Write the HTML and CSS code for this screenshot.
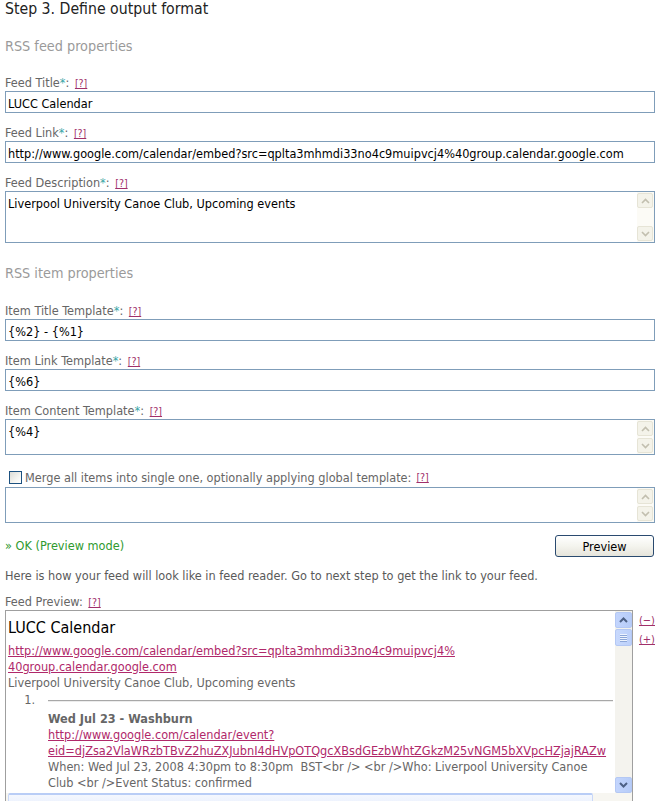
FILE: index.html
```html
<!DOCTYPE html>
<html>
<head>
<meta charset="utf-8">
<title>Step 3. Define output format</title>
<link rel="stylesheet" href="styles.css">
</head>
<body>
<div class="page">
  <h1 class="step">Step 3. Define output format</h1>

  <h2 class="section first">RSS feed properties</h2>

  <div class="field">
    <div class="lbl">Feed Title<span class="req">*</span>: <a class="help" href="#">[?]</a></div>
    <input class="txt" type="text" value="LUCC Calendar">
  </div>

  <div class="field">
    <div class="lbl">Feed Link<span class="req">*</span>: <a class="help" href="#">[?]</a></div>
    <input class="txt" type="text" value="http://www.google.com/calendar/embed?src=qplta3mhmdi33no4c9muipvcj4%40group.calendar.google.com">
  </div>

  <div class="field">
    <div class="lbl">Feed Description<span class="req">*</span>: <a class="help" href="#">[?]</a></div>
    <div class="ta tall">
      <textarea class="ta-in">Liverpool University Canoe Club, Upcoming events</textarea>
      <div class="sb-off">
        <div class="sbo-btn"><svg width="9" height="6" viewBox="0 0 9 6"><polyline points="1,5 4.5,1.5 8,5" fill="none" stroke="#c2bfaf" stroke-width="1.6"/></svg></div>
        <div class="sbo-track"></div>
        <div class="sbo-btn"><svg width="9" height="6" viewBox="0 0 9 6"><polyline points="1,1 4.5,4.5 8,1" fill="none" stroke="#c2bfaf" stroke-width="1.6"/></svg></div>
      </div>
    </div>
  </div>

  <h2 class="section second">RSS item properties</h2>

  <div class="field">
    <div class="lbl">Item Title Template<span class="req">*</span>: <a class="help" href="#">[?]</a></div>
    <input class="txt" type="text" value="{%2} - {%1}">
  </div>

  <div class="field">
    <div class="lbl">Item Link Template<span class="req">*</span>: <a class="help" href="#">[?]</a></div>
    <input class="txt" type="text" value="{%6}">
  </div>

  <div class="field">
    <div class="lbl">Item Content Template<span class="req">*</span>: <a class="help" href="#">[?]</a></div>
    <div class="ta short">
      <textarea class="ta-in">{%4}</textarea>
      <div class="sb-off">
        <div class="sbo-btn"><svg width="9" height="6" viewBox="0 0 9 6"><polyline points="1,5 4.5,1.5 8,5" fill="none" stroke="#c2bfaf" stroke-width="1.6"/></svg></div>
        <div class="sbo-track"></div>
        <div class="sbo-btn"><svg width="9" height="6" viewBox="0 0 9 6"><polyline points="1,1 4.5,4.5 8,1" fill="none" stroke="#c2bfaf" stroke-width="1.6"/></svg></div>
      </div>
    </div>
  </div>

  <div class="merge">
    <label class="chk-row"><span class="chk"></span>Merge all items into single one, optionally applying global template: <a class="help" href="#">[?]</a></label>
    <div class="ta short">
      <textarea class="ta-in"></textarea>
      <div class="sb-off">
        <div class="sbo-btn"><svg width="9" height="6" viewBox="0 0 9 6"><polyline points="1,5 4.5,1.5 8,5" fill="none" stroke="#c2bfaf" stroke-width="1.6"/></svg></div>
        <div class="sbo-track"></div>
        <div class="sbo-btn"><svg width="9" height="6" viewBox="0 0 9 6"><polyline points="1,1 4.5,4.5 8,1" fill="none" stroke="#c2bfaf" stroke-width="1.6"/></svg></div>
      </div>
    </div>
  </div>

  <div class="ok-row">
    <span class="ok">» OK (Preview mode)</span>
    <button class="btn" type="button">Preview</button>
  </div>

  <p class="note">Here is how your feed will look like in feed reader. Go to next step to get the link to your feed.</p>

  <div class="lbl pv-lbl">Feed Preview: <a class="help" href="#">[?]</a></div>

  <div class="pv-wrap">
    <div class="pv">
      <div class="pv-main">
        <div class="pv-content">
          <div class="pv-title">LUCC Calendar</div>
          <a class="pv-link" href="#">http://www.google.com/calendar/embed?src=qplta3mhmdi33no4c9muipvcj4%<br>40group.calendar.google.com</a>
          <div class="pv-text">Liverpool University Canoe Club, Upcoming events</div>
          <div class="pv-item">
            <div class="pv-num">1.</div>
            <div class="pv-body">
              <div class="pv-hr"></div>
              <div class="pv-ititle">Wed Jul 23 - Washburn</div>
              <a class="pv-link" href="#">http://www.google.com/calendar/event?<br>eid=djZsa2VlaWRzbTBvZ2huZXJubnI4dHVpOTQgcXBsdGEzbWhtZGkzM25vNGM5bXVpcHZjajRAZw</a>
              <div class="pv-text">When: Wed Jul 23, 2008 4:30pm to 8:30pm&nbsp; BST&lt;br /&gt; &lt;br /&gt;Who: Liverpool University Canoe<br>Club &lt;br /&gt;Event Status: confirmed</div>
            </div>
          </div>
        </div>
        <div class="sb-on">
          <div class="sbn-btn"><svg width="9" height="6" viewBox="0 0 9 6"><polyline points="1,5 4.5,1.5 8,5" fill="none" stroke="#4d6185" stroke-width="2"/></svg></div>
          <div class="sbn-thumb"><span></span><span></span><span></span><span></span></div>
          <div class="sbn-track"></div>
          <div class="sbn-btn"><svg width="9" height="6" viewBox="0 0 9 6"><polyline points="1,1 4.5,4.5 8,1" fill="none" stroke="#4d6185" stroke-width="2"/></svg></div>
        </div>
      </div>
      <div class="hsb">
        <div class="hsb-thumb"></div>
        <div class="hsb-track"></div>
      </div>
    </div>
    <div class="pv-ctrl">
      <a class="zoom" href="#">(&minus;)</a>
      <a class="zoom" href="#">(+)</a>
    </div>
  </div>
</div>
</body>
</html>
```

FILE: styles.css
```css
html, body {
  margin: 0;
  padding: 0;
  background: #ffffff;
}

body {
  font-family: "DejaVu Sans Condensed", "DejaVu Sans", sans-serif;
  font-size: 12.6px;
  color: #666666;
}

.page {
  padding: 0 6px 0 5px;
}

.step {
  margin: 0;
  font-size: 15.7px;
  line-height: 18px;
  font-weight: normal;
  color: #222222;
}

.section {
  margin: 0;
  font-size: 14.3px;
  line-height: 18px;
  font-weight: normal;
  color: #9a9a9a;
}

.section.first {
  margin-top: 19px;
  margin-bottom: 20px;
}

.section.second {
  margin-top: 21px;
  margin-bottom: 21px;
}

.field {
  margin-bottom: 12px;
}

.lbl {
  height: 16px;
  line-height: 16px;
  color: #666666;
}

.req {
  color: #3aa6a6;
}

.help {
  font-size: 10.5px;
  line-height: 10px;
  color: #a0306a;
  text-decoration: underline;
  margin-left: 2px;
}

.txt {
  display: block;
  box-sizing: border-box;
  width: 100%;
  height: 22px;
  margin: 0;
  padding: 2px 2px 0 2px;
  border: 1px solid #7f9db9;
  font-family: "DejaVu Sans Condensed", "DejaVu Sans", sans-serif;
  font-size: 12.6px;
  color: #000000;
  background: #ffffff;
  outline: none;
}

.ta {
  display: flex;
  box-sizing: border-box;
  width: 100%;
  border: 1px solid #7f9db9;
  background: #ffffff;
}

.ta.tall {
  height: 52px;
}

.ta.short {
  height: 36px;
}

.ta-in {
  flex: 1;
  margin: 0;
  padding: 4px 2px 0 2px;
  border: none;
  resize: none;
  overflow: hidden;
  outline: none;
  font-family: "DejaVu Sans Condensed", "DejaVu Sans", sans-serif;
  font-size: 12.6px;
  line-height: 15px;
  color: #000000;
  background: transparent;
}

.sb-off {
  width: 16px;
  display: flex;
  flex-direction: column;
  padding: 1px 1px 1px 0;
  background: #fbfaf4;
}

.sbo-btn {
  height: 15px;
  box-sizing: border-box;
  border: 1px solid #e6e4d6;
  border-radius: 2px;
  background: #f4f3ea;
  display: flex;
  align-items: center;
  justify-content: center;
}

.sbo-track {
  flex: 1;
  background: #fcfbf6;
}

.chk-row {
  display: flex;
  align-items: center;
  height: 20px;
  color: #666666;
}

.chk {
  display: inline-block;
  box-sizing: border-box;
  width: 13px;
  height: 13px;
  margin: 0 3px 0 4px;
  border: 1px solid #1c5180;
  background: linear-gradient(135deg, #dcdcd6 0%, #f4f4f0 60%, #ffffff 100%);
}

.chk-row .help {
  margin-left: 5px;
}

.ok-row {
  display: flex;
  align-items: center;
  justify-content: space-between;
  margin-top: 12px;
  height: 22px;
}

.ok {
  color: #2f9a2f;
  line-height: 16px;
}

.btn {
  box-sizing: border-box;
  width: 99px;
  height: 22px;
  margin: 0 1px 0 0;
  padding: 0;
  border: 1px solid #2a4a6f;
  border-radius: 3px;
  background: linear-gradient(#ffffff 0%, #f4f4ee 50%, #e5e4db 100%);
  font-family: "DejaVu Sans Condensed", "DejaVu Sans", sans-serif;
  font-size: 12.6px;
  color: #000000;
}

.note {
  margin: 11px 0 0 0;
  line-height: 16px;
  color: #5a5a5a;
}

.pv-lbl {
  margin-top: 10px;
}

.pv-wrap {
  display: flex;
  align-items: flex-start;
}

.pv {
  width: 631px;
  box-sizing: border-box;
  border: 1px solid #9f9f9f;
  display: flex;
  flex-direction: column;
}

.pv-main {
  display: flex;
  height: 182px;
}

.pv-content {
  flex: 1;
  overflow: hidden;
  padding: 7px 2px 0 2px;
  white-space: nowrap;
}

.pv-title {
  font-size: 16px;
  line-height: 20px;
  color: #000000;
  margin-bottom: 5px;
}

.pv-link {
  display: block;
  line-height: 16px;
  color: #b0286a;
  text-decoration: underline;
}

.pv-text {
  line-height: 16px;
  color: #666666;
}

.pv-item {
  display: flex;
}

.pv-num {
  width: 27px;
  padding-right: 13px;
  padding-top: 1px;
  text-align: right;
  line-height: 16px;
  color: #666666;
}

.pv-body {
  flex: 1;
}

.pv-hr {
  height: 0;
  margin: 9px 0 9px 0;
  border-top: 1px solid #a8a8a8;
  border-bottom: 1px solid #ececec;
}

.pv-ititle {
  font-weight: bold;
  line-height: 16px;
  color: #666666;
}

.sb-on {
  width: 17px;
  display: flex;
  flex-direction: column;
  background: #f3f2ec;
  padding: 1px 0 0 0;
}

.sbn-btn {
  height: 16px;
  box-sizing: border-box;
  border: 1px solid #b4c8f4;
  border-radius: 2px;
  background: linear-gradient(90deg, #c3d5fd 0%, #b6ccf8 100%);
  display: flex;
  align-items: center;
  justify-content: center;
}

.sbn-thumb {
  height: 17px;
  margin-top: 1px;
  box-sizing: border-box;
  border: 1px solid #b4c8f4;
  border-radius: 2px;
  background: linear-gradient(90deg, #c8d9fd 0%, #bcd0fa 100%);
  display: flex;
  flex-direction: column;
  align-items: center;
  justify-content: center;
  gap: 1px;
}

.sbn-thumb span {
  width: 7px;
  height: 1px;
  background: #eef4fe;
  box-shadow: 0 1px 0 #8ca6d8;
}

.sbn-track {
  flex: 1;
  background: #f4f3ee;
}

.hsb {
  display: flex;
  height: 17px;
  background: #f7f6f1;
}

.hsb-thumb {
  width: 585px;
  margin-left: 2px;
  box-sizing: border-box;
  border-top: 2px solid #b9cdf6;
  border-left: 1px solid #c9d8f8;
  border-right: 1px solid #c9d8f8;
  border-radius: 2px 2px 0 0;
  background: linear-gradient(#f4f7fe, #e6eefd);
}

.hsb-track {
  flex: 1;
}

.pv-ctrl {
  display: flex;
  flex-direction: column;
  padding: 3px 0 0 6px;
  gap: 3px;
}

.zoom {
  font-size: 11px;
  line-height: 16px;
  color: #a0306a;
  text-decoration: underline;
}
```
